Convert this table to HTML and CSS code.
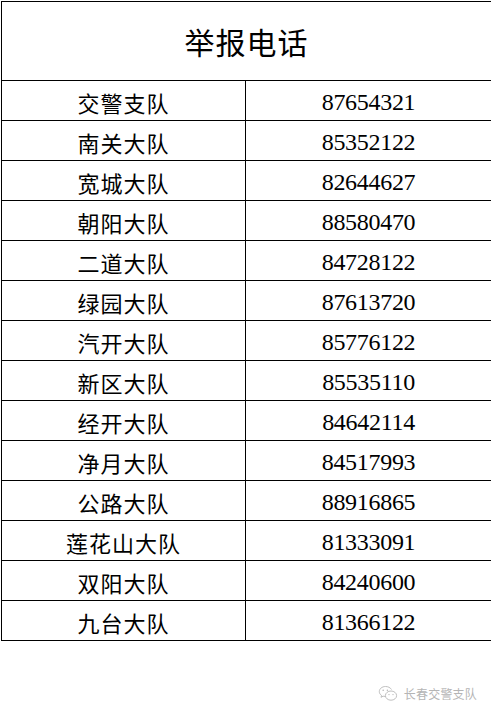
FILE: index.html
```html
<!DOCTYPE html>
<html lang="zh">
<head>
<meta charset="utf-8">
<link rel="stylesheet" href="styles.css">
</head>
<body>
<table class="phones">
  <colgroup><col class="c1"><col class="c2"></colgroup>
  <thead>
    <tr class="head"><th colspan="2">举报电话</th></tr>
  </thead>
  <tbody>
    <tr><td class="name">交警支队</td><td class="num">87654321</td></tr>
    <tr><td class="name">南关大队</td><td class="num">85352122</td></tr>
    <tr><td class="name">宽城大队</td><td class="num">82644627</td></tr>
    <tr><td class="name">朝阳大队</td><td class="num">88580470</td></tr>
    <tr><td class="name">二道大队</td><td class="num">84728122</td></tr>
    <tr><td class="name">绿园大队</td><td class="num">87613720</td></tr>
    <tr><td class="name">汽开大队</td><td class="num">85776122</td></tr>
    <tr><td class="name">新区大队</td><td class="num">85535110</td></tr>
    <tr><td class="name">经开大队</td><td class="num">84642114</td></tr>
    <tr><td class="name">净月大队</td><td class="num">84517993</td></tr>
    <tr><td class="name">公路大队</td><td class="num">88916865</td></tr>
    <tr><td class="name">莲花山大队</td><td class="num">81333091</td></tr>
    <tr><td class="name">双阳大队</td><td class="num">84240600</td></tr>
    <tr><td class="name">九台大队</td><td class="num">81366122</td></tr>
  </tbody>
</table>
<div class="mark">
  <svg class="wx" width="20" height="17" viewBox="0 0 20 17">
    <path d="M7.5 1.5C4 1.5 1.3 3.8 1.3 6.6c0 1.6.9 3 2.3 3.9l-.6 1.8 2.1-1.1c.8.2 1.5.3 2.4.3" fill="none" stroke="#b8b8b8" stroke-width="0.9"/>
    <path d="M13.5 4.5c-1.2-1.9-3.4-3-6-3" fill="none" stroke="#b8b8b8" stroke-width="0.9"/>
    <ellipse cx="13" cy="10.6" rx="5.6" ry="4.6" fill="none" stroke="#b8b8b8" stroke-width="0.9"/>
    <circle cx="5.2" cy="5.2" r="0.8" fill="#b8b8b8"/>
    <circle cx="9.4" cy="5.2" r="0.8" fill="#b8b8b8"/>
    <circle cx="11" cy="9.6" r="0.7" fill="#b8b8b8"/>
    <circle cx="15" cy="9.6" r="0.7" fill="#b8b8b8"/>
  </svg>
  <span class="mark-text">长春交警支队</span>
</div>
</body>
</html>
```
FILE: styles.css
```css
html, body {
  margin: 0;
  padding: 0;
  background: #ffffff;
}
body {
  font-family: "Noto Sans CJK SC", sans-serif;
  color: #000;
}
.phones {
  border-collapse: collapse;
  table-layout: fixed;
  width: 490px;
  margin: 1px 0 0 1px;
}
.c1 { width: 244px; }
.c2 { width: 246px; }
.phones th, .phones td {
  border: 1px solid #000;
  padding: 0;
  text-align: center;
  vertical-align: middle;
}
.head th {
  height: 78px;
  font-weight: normal;
  font-size: 30px;
  font-family: "Noto Sans CJK SC", sans-serif;
  line-height: 1;
  letter-spacing: 1px;
}
.phones tbody tr { height: 40px; }
.phones tbody td {
  height: 37px;
  padding-top: 2px;
}
.name {
  font-size: 22px;
  line-height: 1;
  letter-spacing: 1px;
}
.num {
  font-family: "Liberation Serif", serif;
  font-size: 24px;
  letter-spacing: -0.3px;
  line-height: 1;
}
.mark {
  display: flex;
  justify-content: flex-end;
  align-items: center;
  gap: 6px;
  margin-top: 44px;
  padding-right: 14px;
}
.wx { display: block; }
.mark-text {
  font-size: 12px;
  color: #b5b5b5;
  letter-spacing: 0.2px;
}
```
